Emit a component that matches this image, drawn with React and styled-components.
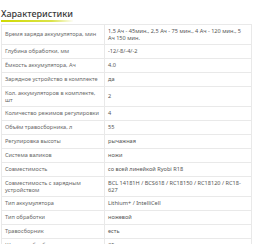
import styled, { createGlobalStyle } from "styled-components"

const specs = [
    ["Время заряда аккумулятора, мин", "1,5 Ач - 45мин., 2,5 Ач - 75 мин., 4 Ач - 120 мин., 5 Ач 150 мин.", true],
    ["Глубина обработки, мм", "-12/-8/-4/-2"],
    ["Ёмкость аккумулятора, Ач", "4.0"],
    ["Зарядное устройство в комплекте", "да"],
    ["Кол. аккумуляторов в комплекте, шт", "2", true],
    ["Количество режимов регулировки", "4"],
    ["Объём травосборника, л", "55"],
    ["Регулировка высоты", "рычажная"],
    ["Система валиков", "ножи"],
    ["Совместимость", "со всей линейкой Ryobi R18"],
    ["Совместимость с зарядным устройством", "BCL 14181H / BCS618 / RC18150 / RC18120 / RC18-627", true],
    ["Тип аккумулятора", "Lithium+ / IntelliCell"],
    ["Тип обработки", "ножевой"],
    ["Травосборник", "есть"],
    ["Ширина обработки, мм", "35"],
]

function App() {
    return (
        <Wrapper>
            <GlobalStyle />
            <Title>Характеристики</Title>
            <Table>
                {specs.map(([label, value, tall]) => (
                    <Row key={label} $tall={tall}>
                        <Label>{label}</Label>
                        <Value>{value}</Value>
                    </Row>
                ))}
            </Table>
        </Wrapper>
    )
}

const GlobalStyle = createGlobalStyle`
    body{
        margin: 0;
        background: #fff;
        font-family: "Noto Sans", "DejaVu Sans", sans-serif;
    }
`;

const Wrapper = styled.div`
    width: 251px;
    padding-left: 1px;
`;

const Title = styled.h2`
    margin: 0;
    font-size: 9px;
    line-height: 10px;
    font-weight: 500;
    color: #3a3a3a;
    display: inline-block;
    padding-bottom: 1px;
    border-bottom: 2px solid transparent;
    border-image: linear-gradient(90deg, #cfd900 0%, #dbe34a 70%, rgba(220,228,80,0) 100%) 1;
`;

const Table = styled.div`
    margin-top: 2px;
    border: 1px solid #e9e9e9;
    border-bottom: none;
`;

const Row = styled.div`
    box-sizing: border-box;
    height: ${(p) => (p.$tall ? "20px" : "14px")};
    display: grid;
    grid-template-columns: 103px 1fr;
    border-bottom: 1px solid #e9e9e9;
    font-size: 5.6px;
    line-height: 6.5px;
`;

const Cell = styled.div`
    padding: 0 3px;
    display: flex;
    align-items: center;
    overflow: visible;
`;

const Label = styled(Cell)`
    color: #6a6a6a;
    border-right: 1px solid #e9e9e9;
`;

const Value = styled(Cell)`
    color: #555;
`;

export default App
